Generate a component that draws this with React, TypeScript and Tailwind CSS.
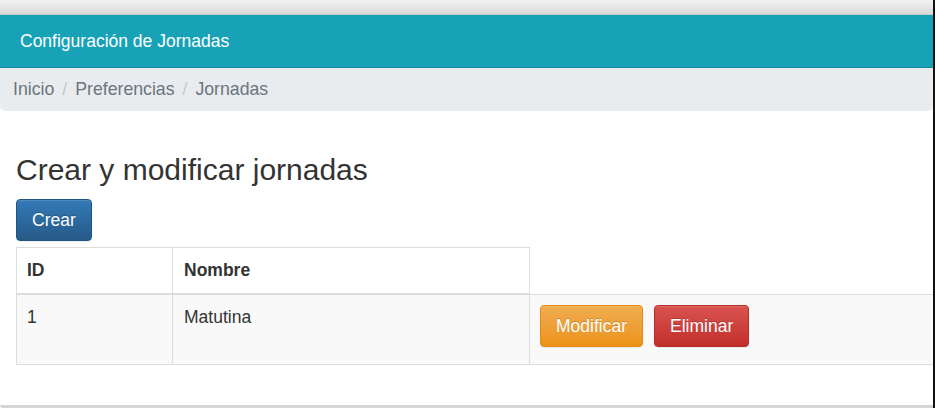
import React from "react"

const font = { fontFamily: '"Liberation Sans", Arial, sans-serif' }

function Btn({ label, tone }: { label: string; tone: "blue" | "orange" | "red" }) {
    const tones = {
        blue: "bg-gradient-to-b from-[#337ab7] to-[#265a88] border-[#245580]",
        orange: "bg-gradient-to-b from-[#f0ad4e] to-[#eb9316] border-[#e38d13]",
        red: "bg-gradient-to-b from-[#d9534f] to-[#c12e2a] border-[#b92c28]",
    }
    return (
        <button
            className={`${tones[tone]} border rounded-[4px] px-[15px] py-[7px] text-[17.5px] leading-[26px] text-white [text-shadow:0_-1px_0_rgba(0,0,0,0.2)] shadow-[inset_0_1px_0_rgba(255,255,255,0.15),0_1px_1px_rgba(0,0,0,0.075)]`}
        >
            {label}
        </button>
    )
}

export default function App() {
    return (
        <div className="w-[935px] h-[408px] flex bg-white overflow-hidden" style={font}>
            <div className="w-[933px] h-full flex flex-col overflow-hidden">
                {/* top strip */}
                <div className="h-[15px] shrink-0 bg-gradient-to-b from-[#f3f3f3] to-[#dadada] border-b border-[#cbcbcb]" />

                {/* title bar */}
                <div className="h-[53px] shrink-0 bg-[#18a2b8] border-b border-[#148a9c] flex items-center px-[20px]">
                    <span className="text-white text-[17.5px]">Configuración de Jornadas</span>
                </div>

                {/* breadcrumb */}
                <div className="h-[43px] shrink-0 bg-[#e9ecef] rounded-b-[5px] flex items-center px-[13px] text-[17.7px] text-[#6c757d]">
                    <span>Inicio</span>
                    <span className="px-[8px] text-[#c3c7cb]">/</span>
                    <span>Preferencias</span>
                    <span className="px-[8px] text-[#c3c7cb]">/</span>
                    <span>Jornadas</span>
                </div>

                {/* content */}
                <div className="flex-1 flex flex-col items-start pl-[16px]">
                    <h1 className="mt-[42px] text-[30px] leading-[33px] text-[#333]">Crear y modificar jornadas</h1>
                    <div className="mt-[13px]">
                        <Btn label="Crear" tone="blue" />
                    </div>

                    <table className="mt-[6px] w-[940px] border-collapse text-[17.5px] leading-[25px] text-[#333]">
                        <thead>
                            <tr>
                                <th className="w-[156px] text-left font-bold px-[10px] py-[10px] border border-[#ddd] border-b-2">ID</th>
                                <th className="w-[357px] text-left font-bold px-[11px] py-[10px] border border-[#ddd] border-b-2">Nombre</th>
                            </tr>
                        </thead>
                        <tbody>
                            <tr className="bg-[#f9f9f9]">
                                <td className="align-top px-[10px] pt-[10px] border border-[#ddd]">1</td>
                                <td className="align-top px-[11px] pt-[10px] border border-[#ddd]">Matutina</td>
                                <td className="align-top pl-[10px] pt-[10px] pb-[17px] border border-[#ddd]">
                                    <div className="flex gap-[11px]">
                                        <Btn label="Modificar" tone="orange" />
                                        <Btn label="Eliminar" tone="red" />
                                    </div>
                                </td>
                            </tr>
                        </tbody>
                    </table>
                </div>

                {/* bottom edge */}
                <div className="h-[3px] shrink-0 bg-[#d6d6d6] rounded-bl-[3px]" />
            </div>
            <div className="w-[2px] h-full bg-[#111]" />
        </div>
    )
}
